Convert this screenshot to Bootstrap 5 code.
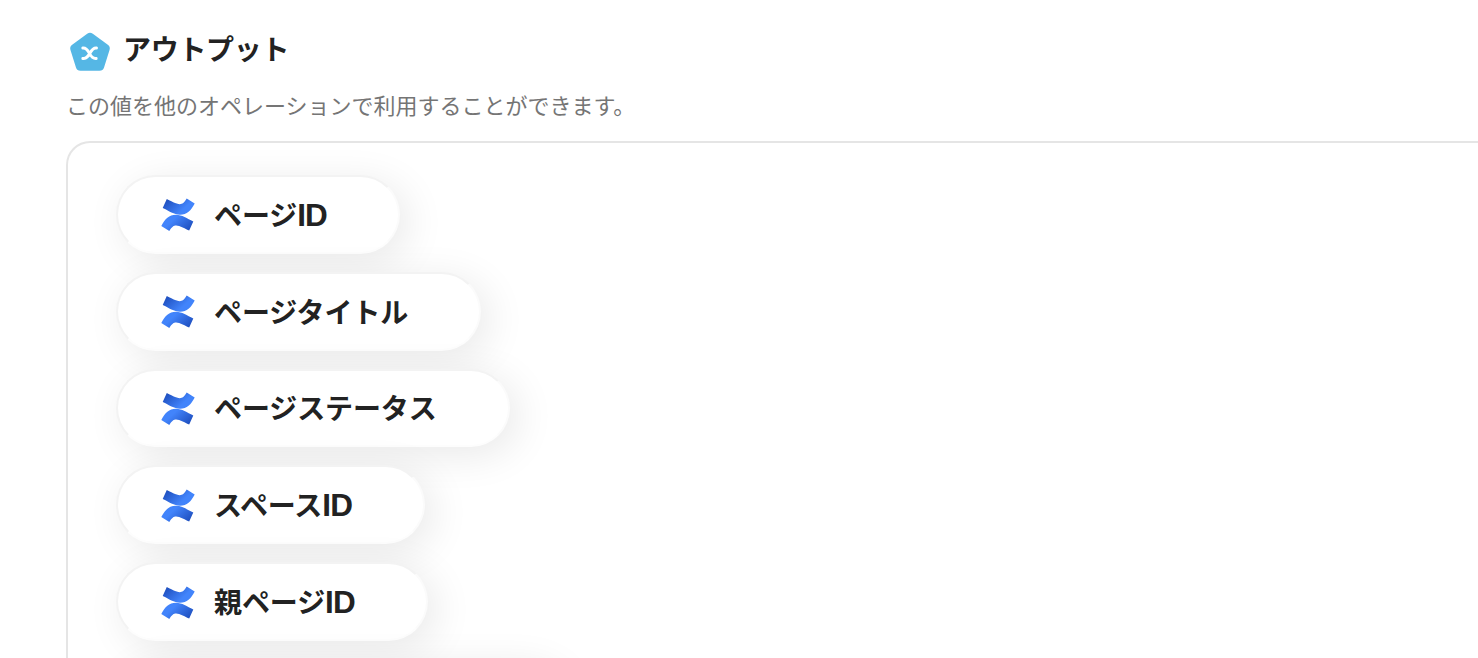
<!DOCTYPE html>
<html lang="ja">
<head>
  <meta charset="UTF-8">
  <title>アウトプット</title>
  <meta name="viewport" content="width=device-width, initial-scale=1">
  <link href="https://cdn.jsdelivr.net/npm/bootstrap@5.3.0/dist/css/bootstrap.min.css" rel="stylesheet">
  <style>
    body { height: 100vh; padding: 28px 0 0 66px; color: #222; font-family: "Noto Sans CJK JP", sans-serif; }
    .output-head { height: 41px; }
    .output-head svg { margin: 2px -1px 0 0; }
    .output-title { font-size: 28px; line-height: 40px; letter-spacing: -.3px; }
    .output-note { margin: 20px 0 21px; font-size: 22px; line-height: 31px; color: #757575; }
    .output-panel { height: 517px; border: 2px solid #e5e5e5; border-radius: 24px 0 0 0; padding: 32px 0 0 48px; gap: 18px; }
    .pill { height: 78.8px; flex: none; padding: 0 71px 0 43px; border: 2px solid #f3f3f3; border-bottom-color: #fdfdfd; border-right-color: #fbfbfb; background: #fff; box-shadow: 8px 8px 40px rgba(0, 0, 0, .09); font-size: 28px; }
    .pill svg { flex: none; margin: 2px 19px 0 0; }
    .pill-label { line-height: 40px; margin-top: -1px; letter-spacing: -.1px; }
    .latin { font-family: "Liberation Sans", sans-serif; font-size: 31.5px; letter-spacing: -.8px; line-height: 1; }
    .pill-blank { width: 445px; }
  </style>
</head>
<body class="overflow-hidden">
  <svg width="0" height="0" class="position-absolute">
    <defs>
      <linearGradient id="blue" x1="0" y1=".3" x2=".65" y2=".65">
        <stop offset="0" stop-color="#1f50c0"/>
        <stop offset="1" stop-color="#4284fb"/>
      </linearGradient>
      <path id="wave" fill="url(#blue)" d="M5.8 1.1 1.7 10.1C8 13 13 16.8 19 16.8c7 0 11-4 14.7-11.2L25.7.6C23 5 21.5 6.2 18.8 6.2 15.5 6.2 9 2.7 5.8 1.1Z"/>
      <symbol id="confluence" viewBox="0 0 34 34">
        <use href="#wave"/>
        <use href="#wave" transform="rotate(180 17 16.8)"/>
      </symbol>
    </defs>
  </svg>

  <!-- Heading -->
  <div class="output-head d-flex align-items-start">
    <svg width="58" height="42" viewBox="0 0 58 42">
      <path d="M24 7.500 39 18.500 33.500 36H14.500L9 18.500Z" fill="#55b7e5" stroke="#55b7e5" stroke-width="9.500" stroke-linejoin="round"/>
      <path d="M16.800 18c7-1 6 11.500 13.400 10.500M30.500 18c-7-1-6 11.500-13.700 10.500" fill="none" stroke="#fff" stroke-width="2.900" stroke-linecap="round"/>
    </svg>
    <h1 class="output-title fw-bold mb-0">アウトプット</h1>
  </div>
  <p class="output-note">この値を他のオペレーションで利用することができます。</p>

  <!-- Output values -->
  <div class="output-panel d-flex flex-column align-items-start border-end-0 border-bottom-0 overflow-hidden">
    <div class="pill rounded-pill d-flex align-items-center">
      <svg width="34" height="34"><use href="#confluence"/></svg>
      <span class="pill-label fw-bold">ページ<span class="latin">ID</span></span>
    </div>
    <div class="pill rounded-pill d-flex align-items-center">
      <svg width="34" height="34"><use href="#confluence"/></svg>
      <span class="pill-label fw-bold">ページタイトル</span>
    </div>
    <div class="pill rounded-pill d-flex align-items-center">
      <svg width="34" height="34"><use href="#confluence"/></svg>
      <span class="pill-label fw-bold">ページステータス</span>
    </div>
    <div class="pill rounded-pill d-flex align-items-center">
      <svg width="34" height="34"><use href="#confluence"/></svg>
      <span class="pill-label fw-bold">スペース<span class="latin">ID</span></span>
    </div>
    <div class="pill rounded-pill d-flex align-items-center">
      <svg width="34" height="34"><use href="#confluence"/></svg>
      <span class="pill-label fw-bold">親ページ<span class="latin">ID</span></span>
    </div>
    <div class="pill pill-blank rounded-pill"></div>
  </div>

  <script src="https://cdn.jsdelivr.net/npm/bootstrap@5.3.0/dist/js/bootstrap.bundle.min.js"></script>
</body>
</html>
